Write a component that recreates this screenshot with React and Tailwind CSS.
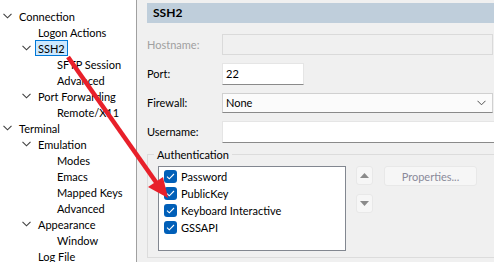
import React from 'react';

const tree = [
  { label: 'Connection', level: 0, open: true },
  { label: 'Logon Actions', level: 1 },
  { label: 'SSH2', level: 1, open: true, selected: true },
  { label: 'SFTP Session', level: 2 },
  { label: 'Advanced', level: 2 },
  { label: 'Port Forwarding', level: 1, open: true },
  { label: 'Remote/X11', level: 2 },
  { label: 'Terminal', level: 0, open: true },
  { label: 'Emulation', level: 1, open: true },
  { label: 'Modes', level: 2 },
  { label: 'Emacs', level: 2 },
  { label: 'Mapped Keys', level: 2 },
  { label: 'Advanced', level: 2 },
  { label: 'Appearance', level: 1, open: true },
  { label: 'Window', level: 2 },
  { label: 'Log File', level: 1 },
];

const indent = { 0: 'pl-[3px]', 1: 'pl-[22px]', 2: 'pl-[41px]' };

const Chevron = () => (
  <svg width="9" height="6" viewBox="0 0 9 6" className="text-[#404040]">
    <path d="M0.5 0.8 L4.5 4.8 L8.5 0.8" fill="none" stroke="currentColor" strokeWidth="1.1" />
  </svg>
);

const Check = () => (
  <span className="w-[13px] h-[13px] rounded-[3px] bg-[#005fb8] flex items-center justify-center shrink-0">
    <svg width="9" height="7" viewBox="0 0 9 7">
      <path d="M1 3.6 L3.3 5.8 L8 1" fill="none" stroke="white" strokeWidth="1.1" />
    </svg>
  </span>
);

const TreeRow = ({ item }) => (
  <div className={`h-[16px] flex items-center ${indent[item.level]}`}>
    <span className="w-[16px] flex items-center shrink-0">{item.open && <Chevron />}</span>
    {item.selected ? (
      <span className="-ml-[3px] px-[2px] h-[16px] flex items-center bg-[#cce8ff] border border-[#0078d7]">{item.label}</span>
    ) : (
      <span>{item.label}</span>
    )}
  </div>
);

const FormRow = ({ label, disabled, children }) => (
  <div className="flex items-center h-[21px]">
    <span className={`w-[75px] shrink-0 ${disabled ? 'text-[#a0a0a0]' : ''}`}>{label}</span>
    {children}
  </div>
);

export default function App() {
  return (
    <div className="relative w-[494px] h-[262px] flex overflow-hidden bg-[#f0f0f0] text-[11px] text-black font-['Lato',sans-serif] leading-none">
      <div className="w-[137px] shrink-0 bg-white border-r border-[#a0a0a0] pt-[8px]">
        {tree.map((item, i) => (
          <TreeRow key={i} item={item} />
        ))}
      </div>

      <div className="flex-1 pl-[10px] pt-[3px] flex flex-col min-w-0">
        <div className="h-[20px] bg-[#bfcedb] pl-[6px] flex items-center font-bold text-[12px]">SSH2</div>

        <div className="mt-[11px] flex flex-col gap-[8px]">
          <FormRow label="Hostname:" disabled>
            <div className="flex-1 h-[21px] border border-[#dadada] bg-[#f0f0f0] mr-[1px]" />
          </FormRow>
          <FormRow label="Port:">
            <div className="w-[82px] h-[22px] bg-white border border-[#e5e5e5] border-b-[#8a8a8a] flex items-center pl-[3px]">22</div>
          </FormRow>
          <FormRow label="Firewall:">
            <div className="flex-1 h-[20px] bg-[#fbfbfb] border border-[#d0d0d0] border-b-[#8a8a8a] mr-[1px] flex items-center pl-[3px] pr-[6px] justify-between">
              <span>None</span>
              <svg width="9" height="6" viewBox="0 0 9 6" className="text-[#505050]">
                <path d="M0.5 0.8 L4.5 4.8 L8.5 0.8" fill="none" stroke="currentColor" strokeWidth="1" />
              </svg>
            </div>
          </FormRow>
          <FormRow label="Username:">
            <div className="flex-1 h-[22px] bg-white border border-[#e5e5e5] border-b-[#8a8a8a] -mr-[2px]" />
          </FormRow>
        </div>

        <div className="relative mt-[12px] h-[104px] border border-[#dcdcdc] -mr-[4px] pl-[10px] pt-[11px] flex gap-[10px]">
          <span className="absolute -top-[6px] left-[6px] px-[3px] bg-[#f0f0f0]">Authentication</span>
          <div className="w-[188px] h-[85px] bg-white border border-[#828790] pl-[5px] pt-[3px] flex flex-col gap-[4px]">
            {['Password', 'PublicKey', 'Keyboard Interactive', 'GSSAPI'].map((t) => (
              <div key={t} className="flex items-center gap-[4px] h-[13px]">
                <Check />
                <span>{t}</span>
              </div>
            ))}
          </div>
          <div className="flex flex-col gap-[9px]">
            <div className="w-[17px] h-[19px] rounded-[3px] bg-[#f6f6f6] border border-[#e8e8e8] flex items-center justify-center">
              <svg width="9" height="5" viewBox="0 0 9 5"><path d="M0 5 L4.5 0 L9 5 Z" fill="#8a8a8a" /></svg>
            </div>
            <div className="w-[17px] h-[19px] rounded-[3px] bg-[#f6f6f6] border border-[#e8e8e8] flex items-center justify-center">
              <svg width="9" height="5" viewBox="0 0 9 5"><path d="M0 0 L4.5 5 L9 0 Z" fill="#8a8a8a" /></svg>
            </div>
          </div>
          <div className="ml-[1px] w-[93px] h-[20px] rounded-[3px] bg-[#f6f6f6] border border-[#e8e8e8] flex items-center justify-center text-[#8a8a9a]">
            Properties...
          </div>
        </div>
      </div>

      <svg className="absolute inset-0 pointer-events-none" width="494" height="262" viewBox="0 0 494 262">
        <line x1="68" y1="57" x2="158" y2="185" stroke="#e8202a" strokeWidth="4.5" />
        <path d="M168 198 L148 187 L163 177 Z" fill="#e8202a" />
      </svg>
    </div>
  );
}
